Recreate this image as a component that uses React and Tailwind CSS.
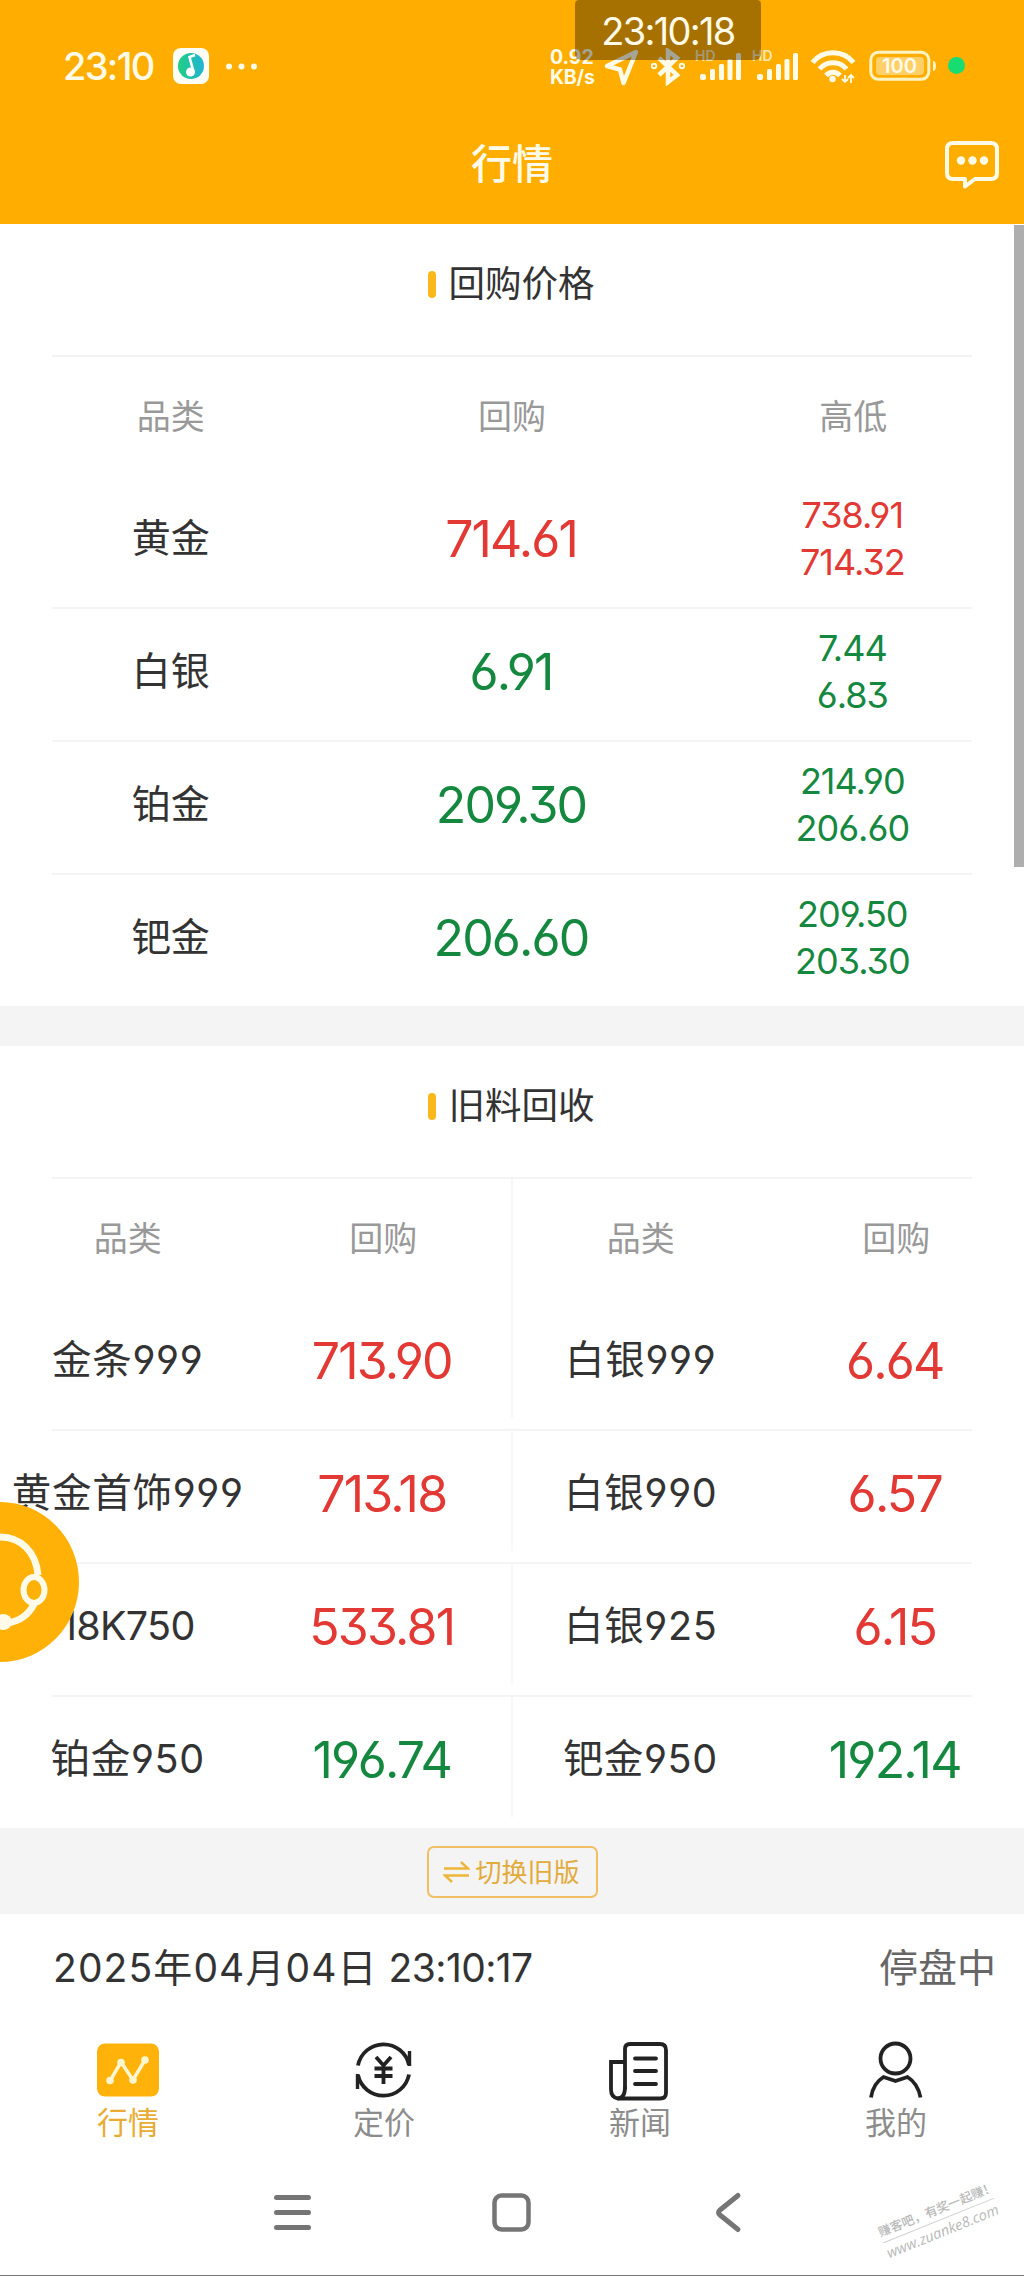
/**
 * Precious metal quotes -- mobile market page with buyback and recycling prices.
 */

const UP = 'text-[#e33935]';
const DOWN = 'text-[#15883f]';

// open six/nine and flat-topped three
const DIGITS = "[font-feature-settings:'cv03','cv04','cv09']";

const QUOTES = [
  { name: '黄金', price: '714.61', high: '738.91', low: '714.32', color: UP },
  { name: '白银', price: '6.91', high: '7.44', low: '6.83', color: DOWN },
  { name: '铂金', price: '209.30', high: '214.90', low: '206.60', color: DOWN },
  { name: '钯金', price: '206.60', high: '209.50', low: '203.30', color: DOWN },
];

const RECYCLE = [
  [
    { name: '金条999', price: '713.90', color: UP },
    { name: '白银999', price: '6.64', color: UP },
  ],
  [
    { name: '黄金首饰999', price: '713.18', color: UP },
    { name: '白银990', price: '6.57', color: UP },
  ],
  [
    { name: '18K750', price: '533.81', color: UP, tight: true },
    { name: '白银925', price: '6.15', color: UP },
  ],
  [
    { name: '铂金950', price: '196.74', color: DOWN },
    { name: '钯金950', price: '192.14', color: DOWN },
  ],
];

function SignalIcon() {
  return (
    <svg className="w-[44px] h-[34px] overflow-visible" viewBox="0 0 44 34" fill="#fffbe8">
      <text x="-2" y="13" fontSize="14" fontWeight="600" fillOpacity="0.8" fontFamily="Inter">HD</text>
      <rect x="3" y="26" width="6" height="6" rx="2" />
      <rect x="13" y="21" width="5" height="11" rx="1.5" />
      <rect x="22" y="16" width="5" height="16" rx="1.5" />
      <rect x="30.500" y="11" width="5" height="21" rx="1.5" />
      <rect x="39" y="5" width="5" height="27" rx="1.5" />
    </svg>
  );
}

function StatusBar() {
  return (
    <div className="flex h-[132px] pt-[48px] pl-[63px] text-[#fffbe8]">
      <div className="text-[38px] leading-[36px] font-medium w-[110px] tracking-[-1.7px]">23:10</div>
      <svg className="w-[36px] h-[36px] shrink-0" viewBox="0 0 36 36">
        <defs>
          <linearGradient id="note" x1="0" x2="1">
            <stop offset="0" stopColor="#1fcf83" />
            <stop offset="1" stopColor="#22b3d6" />
          </linearGradient>
        </defs>
        <rect width="36" height="36" rx="8" fill="#fdfff6" />
        <circle cx="18" cy="18" r="13" fill="url(#note)" />
        <circle cx="17.5" cy="24" r="4.5" fill="#fff" />
        <path d="M20.500 24L16.500 9l5.500-2" fill="none" stroke="#fff" strokeWidth="2.6" />
      </svg>
      <svg className="ml-[15px] w-[34px] h-[36px] shrink-0" viewBox="0 0 34 36" fill="#fffbe8">
        <circle cx="5" cy="18.500" r="3" />
        <circle cx="17.500" cy="18.500" r="3" />
        <circle cx="30" cy="18.500" r="3" />
      </svg>
      <div className="ml-[292px] w-[53px] text-[19.500px] leading-[19.500px] font-bold">
        <div>0.92</div>
        <div className="tracking-[-0.2px]">KB/s</div>
      </div>
      <svg className="w-[36px] h-[38px] shrink-0" viewBox="0 0 36 38" fill="none" stroke="#fffbe8" strokeWidth="4.500" strokeLinejoin="round">
        <path d="M33 4L4 18l13 3.500L20.500 35z" />
      </svg>
      <svg className="ml-[12px] w-[34px] h-[38px] shrink-0" viewBox="0 0 34 38" fill="none" stroke="#fffbe8" strokeWidth="4.500">
        <path d="M8 10l18 17-9 7V3l9 7L8 27" />
        <circle cx="3" cy="18" r="1" />
        <circle cx="31" cy="18" r="1" />
      </svg>
      <div className="ml-[12px] flex gap-[13px]">
        <SignalIcon />
        <SignalIcon />
      </div>
      <svg className="ml-[12px] w-[46px] h-[36px] shrink-0" viewBox="0 0 46 36" fill="none" stroke="#fffbe8" strokeWidth="5">
        <path d="M2.500 14.500C13 1.500 33 1.500 43.500 14.500" />
        <path d="M9.500 21c7-8.500 20-8.500 27 0" />
        <path d="M16 27.500c4-4.500 10-4.500 14 0" />
        <circle cx="22.500" cy="31" r="3.200" fill="#fffbe8" stroke="none" />
        <path d="M35 34v-7m-3 4l3 3 3-3M41 27v8m-3-5l3-3 3 3" strokeWidth="1.800" />
      </svg>
      <svg className="ml-[13px] w-[68px] h-[36px] shrink-0" viewBox="0 0 68 36">
        <rect x="1.800" y="4.300" width="58" height="27" rx="7.500" fill="none" stroke="#fff3c4" strokeWidth="3" />
        <rect x="7" y="9" width="48" height="18" rx="4" fill="#ffcf68" />
        <path d="M64 13q3 0 3 5t-3 5z" fill="#fff3c4" />
        <text x="30.500" y="25" fontSize="20" fontWeight="600" textAnchor="middle" fontFamily="Inter" fill="#fffbe8">100</text>
      </svg>
      <div className="ml-[11px] mt-[9px] size-[17px] shrink-0 rounded-full bg-[#17dc72]" />
    </div>
  );
}

function TitleBar() {
  return (
    <div className="relative flex h-[92px] items-start justify-center text-[#fffbe8]">
      <h1 className="text-[41px] leading-[64px] font-medium">行情</h1>
      <svg className="absolute right-[24px] top-[7px] w-[56px] h-[50px]" viewBox="0 0 56 50" fill="none" stroke="#fffbe8" strokeWidth="4" strokeLinejoin="round">
        <path d="M9 4h38q6 0 6 6v24q0 6-6 6H31l-10 7.500V40H9q-6 0-6-6V10q0-6 6-6z" />
        <g fill="#fffbe8" stroke="none">
          <circle cx="17" cy="21.500" r="4.200" />
          <circle cx="28.500" cy="21.500" r="4.200" />
          <circle cx="40" cy="21.500" r="4.200" />
        </g>
      </svg>
    </div>
  );
}

function SectionTitle({ children }) {
  return (
    <div className="mx-[52px] flex h-[133px] justify-center border-b-2 border-[#f4f4f4] pt-[33px] pr-[2px]">
      <span className="mt-[14px] mr-[13px] h-[27px] w-[8px] rounded-full bg-[#fbb81c]" />
      <h2 className="text-[36.500px] leading-[54px] text-[#333]">{children}</h2>
    </div>
  );
}

function QuoteTable() {
  return (
    <section className="h-[782px] bg-white">
      <SectionTitle>回购价格</SectionTitle>
      <div className="grid h-[119px] grid-cols-3 text-center text-[34px] leading-[120px] text-[#999]">
        <span>品类</span>
        <span>回购</span>
        <span>高低</span>
      </div>
      {QUOTES.map((q, i) => (
        <div key={q.name} className="h-[133px]">
          <div className="grid h-[131px] grid-cols-3 items-center pb-[5px] text-center">
            <span className="pb-[2px] text-[39px] text-[#333]">{q.name}</span>
            <span className={`pr-[2px] text-[50px] tracking-[-1.9px] ${DIGITS} ${q.color}`}>{q.price}</span>
            <span className={`pr-[2px] text-[36px] leading-[47.500px] tracking-[-1px] ${DIGITS} ${q.color}`}>
              <div>{q.high}</div>
              <div>{q.low}</div>
            </span>
          </div>
          {i < QUOTES.length - 1 && <div className="mx-[52px] h-[2px] bg-[#f4f4f4]" />}
        </div>
      ))}
    </section>
  );
}

function RecycleCell({ item }) {
  return (
    <div className="grid flex-1 grid-cols-2 items-center pb-[5px] text-center">
      <span
        className={`flex justify-center whitespace-nowrap pb-[1px] text-[39.500px] text-[#333] ${DIGITS} ${
          item.tight ? 'tracking-[-0.7px]' : 'tracking-[0.7px]'
        }`}
      >
        {item.name}
      </span>
      <span className={`pr-[3px] text-[50px] tracking-[-1.8px] ${DIGITS} ${item.color}`}>{item.price}</span>
    </div>
  );
}

function RecycleTable() {
  return (
    <section className="h-[782px] bg-white">
      <SectionTitle>旧料回收</SectionTitle>
      <div className="flex h-[119px] text-center text-[34px] leading-[120px] text-[#999]">
        <div className="grid flex-1 grid-cols-2">
          <span>品类</span>
          <span>回购</span>
        </div>
        <div className="w-[2px] bg-[#f7f7f7]" />
        <div className="grid flex-1 grid-cols-2">
          <span>品类</span>
          <span>回购</span>
        </div>
      </div>
      {RECYCLE.map(([left, right], i) => (
        <div key={left.name} className="h-[133px]">
          <div className="flex h-[131px]">
            <RecycleCell item={left} />
            <div className="h-[120px] w-[2px] bg-[#f7f7f7]" />
            <RecycleCell item={right} />
          </div>
          {i < RECYCLE.length - 1 && <div className="mx-[52px] h-[2px] bg-[#f4f4f4]" />}
        </div>
      ))}
    </section>
  );
}

function SwitchBar() {
  return (
    <div className="flex h-[86px] justify-center bg-[#f4f4f4] pt-[18px]">
      <button className="flex h-[52px] w-[171px] items-center rounded-[7px] border-2 border-[#f0bf62] pl-[14px] text-[26px] text-[#e2ab3c]">
        <svg className="mr-[6px] w-[27px] h-[24px]" viewBox="0 0 27 24" fill="none" stroke="#edb53a" strokeWidth="2.400">
          <path d="M1 8.500h24L18 2M26 15.500H2l7 6.500" />
        </svg>
        切换旧版
      </button>
    </div>
  );
}

const TABS = [
  {
    label: '行情',
    active: true,
    icon: (
      <>
        <rect x="1" y="4.500" width="62" height="53" rx="8" fill="#ffb20a" />
        <path d="M14 42L25 23l12 18 12-20" fill="none" stroke="#fff6d0" strokeWidth="3.500" />
        <g fill="#fff6d0">
          <circle cx="14" cy="41.500" r="3.800" />
          <circle cx="25" cy="23.500" r="3.800" />
          <circle cx="37" cy="41" r="3.800" />
          <circle cx="49" cy="21" r="3.800" />
        </g>
      </>
    ),
  },
  {
    label: '定价',
    icon: (
      <g fill="none" stroke="#222" strokeWidth="3.800">
        <path d="M6 26.500A26 26 0 0 1 57 26" />
        <path d="M57.500 12v15" strokeWidth="3.400" />
        <path d="M57 35.500A26 26 0 0 1 6 36" />
        <path d="M5.500 50V35" strokeWidth="3.400" />
        <path d="M24 18l7.500 8.500L39 18M31.500 26v19M22.500 29.500h18M22.500 37h18" />
      </g>
    ),
  },
  {
    label: '新闻',
    icon: (
      <g fill="none" stroke="#222" strokeWidth="3.800">
        <path d="M17 50V10q0-5 5-5h30q6 0 6 6v43q0 5.500-6 5.500H10q-7-1-7-9V23h14" />
        <path d="M17 48q0 11-7 11.500" />
        <path d="M27 19.500h21M27 32h21M27 45h21" strokeLinecap="round" />
      </g>
    ),
  },
  {
    label: '我的',
    icon: (
      <g fill="none" stroke="#222" strokeWidth="3.800">
        <circle cx="31.500" cy="19.500" r="15" />
        <path d="M7 58.500q2-14 12.500-20.500L31.500 42l12-4Q54 44.500 56.500 58.500" strokeLinejoin="round" />
      </g>
    ),
  },
];

function TabBar() {
  return (
    <nav className="grid h-[151px] grid-cols-4 pt-[1px]">
      {TABS.map((t) => (
        <div key={t.label} className="flex flex-col items-center">
          <svg className="w-[64px] h-[64px]" viewBox="0 0 64 64">{t.icon}</svg>
          <span className={`text-[31px] leading-[40px] ${t.active ? 'text-[#e8ac35]' : 'text-[#8c8c8c]'}`}>{t.label}</span>
        </div>
      ))}
    </nav>
  );
}

function SystemNav() {
  return (
    <div className="flex h-[87px] border-b border-[#777] pt-[2px]">
      <svg className="ml-[270px] w-[46px] h-[46px]" viewBox="0 0 46 46" stroke="#757575" strokeWidth="5" strokeLinecap="round">
        <path d="M6.500 6.500h32M6.500 21.500h32M6.500 36.500h32" />
      </svg>
      <svg className="ml-[172px] w-[46px] h-[46px]" viewBox="0 0 46 46" fill="none" stroke="#757575" strokeWidth="4.500">
        <rect x="6.500" y="4.500" width="34" height="34" rx="7" />
      </svg>
      <svg className="ml-[173px] w-[46px] h-[46px]" viewBox="0 0 46 46" fill="none" stroke="#757575" strokeWidth="5" strokeLinecap="round" strokeLinejoin="round">
        <path d="M31 4.500L13 19q-3 2.500 0 5l18 14.500" />
      </svg>
    </div>
  );
}

function SupportButton() {
  return (
    <svg className="absolute left-0 top-[1501px] w-[80px] h-[162px]" viewBox="0 0 80 162">
      <path d="M0 1a79 80 0 010 160z" fill="#ffb107" />
      <g fill="none" stroke="#fffbe8" strokeWidth="7">
        <path d="M0 36C21 36 36 51 38 74" />
        <ellipse cx="34" cy="89" rx="10.500" ry="13" strokeWidth="6" />
        <path d="M34 103Q26 119 8 122" />
      </g>
      <ellipse cx="3" cy="121" rx="9" ry="8" fill="#fffbe8" />
    </svg>
  );
}

function Watermark() {
  return (
    <div className="absolute left-[879px] top-[2200px] w-[120px] -rotate-[22deg] whitespace-nowrap text-[#b8b8b8]">
      <div className="border-b border-[#d0d0d0] text-[12.500px] leading-[20px] font-medium">赚客吧，有奖一起赚！</div>
      <div className="text-[14.500px] leading-[22px] italic font-['Open_Sans']">www.zuanke8.com</div>
    </div>
  );
}

export default function App() {
  return (
    <div className="relative h-[2276px] w-[1024px] overflow-hidden bg-white font-['Inter','Noto_Sans_CJK_SC',sans-serif]">
      <header className="h-[224px] bg-[#ffae00]">
        <StatusBar />
        <TitleBar />
      </header>
      <QuoteTable />
      <div className="h-[40px] bg-[#f4f4f4]" />
      <RecycleTable />
      <SwitchBar />
      <div className="flex h-[124px] pl-[53px] pr-[28px] pt-[27px] text-[39px] leading-[54px]">
        <span className="tracking-[1.100px] text-[#333]">2025年04月04日</span>
        <span className="ml-[11px] tracking-[-0.6px] text-[#333]">23:10:17</span>
        <span className="ml-auto text-[#666]">停盘中</span>
      </div>
      <TabBar />
      <SystemNav />

      <div className="absolute left-[575px] top-0 flex h-[60px] w-[186px] justify-center rounded-b-[6px] rounded-t-[4px] bg-black/35 text-[38px] leading-[62px] tracking-[-1.7px] text-[#fffbe8]">
        23:10:18
      </div>
      <div className="absolute right-0 top-[225px] h-[642px] w-[10px] bg-[#aeaeae]" />
      <SupportButton />
      <Watermark />
    </div>
  );
}
